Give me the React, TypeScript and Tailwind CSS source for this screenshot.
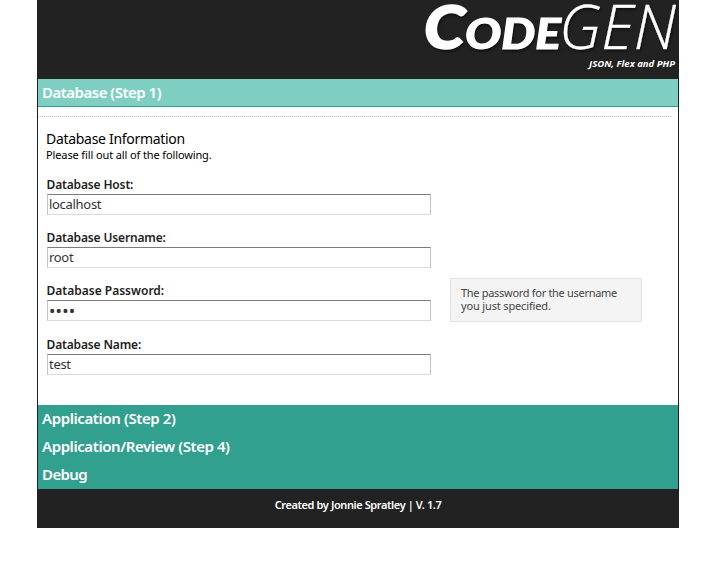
import React from "react";

function Logo() {
  return (
    <svg width="264" height="79" viewBox="414 0 264 79" className="block" role="img" aria-label="CodeGEN">
      <g className="fill-white stroke-white" style={{ filter: "drop-shadow(1px 2px 1px rgba(0,0,0,.5))" }}>
        <g fontFamily="Lato, 'Open Sans', sans-serif" fontStyle="italic" fontWeight="900">
          <text x="424" y="48.5" fontSize="60" strokeWidth="1.6" textLength="41" lengthAdjust="spacingAndGlyphs">C</text>
          <text x="465" y="48.5" fontSize="42" strokeWidth="1" textLength="96" lengthAdjust="spacingAndGlyphs">ODE</text>
        </g>
        <text x="559" y="49" fontSize="61" strokeWidth="0.3" fontFamily="'Open Sans', 'Noto Sans', sans-serif" fontStyle="italic" fontWeight="300" textLength="117" lengthAdjust="spacingAndGlyphs">GEN</text>
      </g>
      <text x="589" y="67" fontSize="9.5" className="fill-white" fontFamily="'Open Sans', 'Noto Sans', sans-serif" fontStyle="italic" fontWeight="700" textLength="86" lengthAdjust="spacingAndGlyphs">JSON, Flex and PHP</text>
    </svg>
  );
}

type FieldProps = { label: string; value: string; type?: string; labelClass?: string; valueClass?: string; className: string };

function Field({ label, value, type = "text", labelClass = "tracking-[-0.15px]", valueClass = "text-[13px] tracking-[-0.3px]", className }: FieldProps) {
  return (
    <label className={`block w-[384px] ${className}`}>
      <span className={`-ml-[0.5px] block h-[17px] whitespace-nowrap text-[12px] leading-[15px] font-semibold text-[#222] ${labelClass}`}>{label}</span>
      <input
        type={type}
        defaultValue={value}
        className={`block h-[21px] w-full border border-t-[#7b7b7b] border-r-[#c4c4c4] border-b-[#dadada] border-l-[#c4c4c4] bg-white px-px pb-px leading-[18px] text-[#333] outline-none ${valueClass}`}
      />
    </label>
  );
}

function Step({ title, className }: { title: string; className: string }) {
  return <h2 className={`h-7 whitespace-nowrap pl-1 text-[15px] leading-[26px] font-semibold text-white ${className}`}>{title}</h2>;
}

export default function App() {
  return (
    <div className="h-[562px] w-[714px] overflow-hidden bg-white pl-[37px] font-['Noto_Sans','Open_Sans',sans-serif]">
      <main className="h-[528px] w-[642px] border-x border-[#222] bg-white">
        <header className="flex h-[79px] justify-end bg-[#222]"><Logo /></header>
        <Step title="Database (Step 1)" className="border-b border-[#32a08e] bg-[#7ecfc2] tracking-[-0.5px]" />
        <section className="h-[298px] pt-[9px]">
          <div className="mr-[7px] border-t border-dotted border-[#bbb]" />
          <div className="flex pl-2">
            <form className="w-[385px] pt-[13px] pl-px">
              <h3 className="-ml-px h-[17px] whitespace-nowrap text-[14px] leading-[17px] tracking-[-0.3px] text-black">Database Information</h3>
              <p className="-ml-px h-[15px] whitespace-nowrap text-[11px] leading-[15px] tracking-[-0.12px] text-black">Please fill out all of the following.</p>
              <Field label="Database Host:" value="localhost" className="mt-[15px]" />
              <Field label="Database Username:" value="root" className="mt-[15px]" />
              <Field label="Database Password:" value="test" type="password" className="mt-[15px]" labelClass="tracking-normal" valueClass="text-[17px] tracking-[0.2px]" />
              <Field label="Database Name:" value="test" className="mt-4" />
            </form>
            <aside className="mt-[161px] ml-[19px] h-11 w-[192px] border border-[#e2e2e2] bg-[#f4f4f4] pt-[7px] pl-[10px] text-[11px] leading-[13px] tracking-[-0.3px] text-[#444]">
              <div className="whitespace-nowrap">The password for the username</div>
              <div className="whitespace-nowrap tracking-[-0.15px]">you just specified.</div>
            </aside>
          </div>
        </section>
        <nav className="bg-[#32a08e]">
          <Step title="Application (Step 2)" className="tracking-[-0.4px]" />
          <Step title="Application/Review (Step 4)" className="tracking-[-0.42px]" />
          <Step title="Debug" className="tracking-[-0.6px]" />
        </nav>
        <footer className="h-[39px] bg-[#222] pt-[8px] text-center text-[11px] leading-[15px] font-semibold tracking-[-0.4px] text-white">
          Created by Jonnie Spratley | V. 1.7
        </footer>
      </main>
    </div>
  );
}
